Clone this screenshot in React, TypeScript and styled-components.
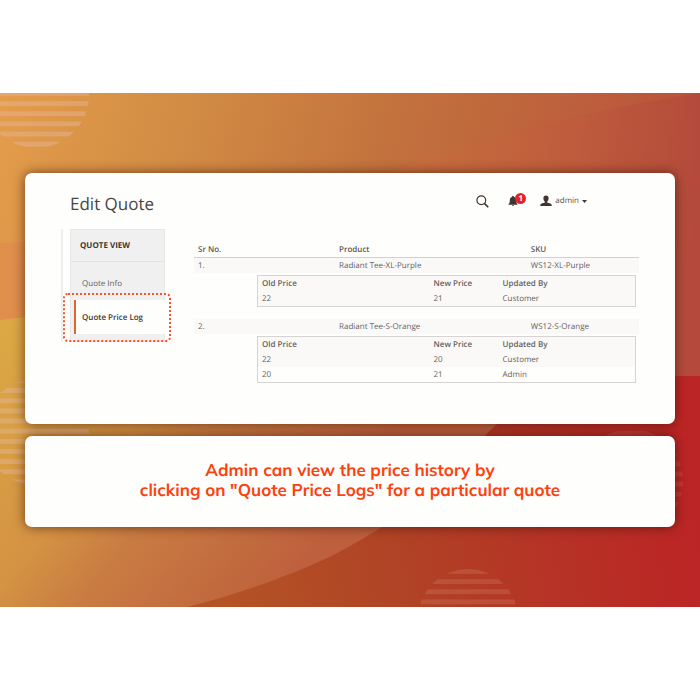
import React from "react";
import styled, { createGlobalStyle, css } from "styled-components";

const GlobalStyle = createGlobalStyle`
  *, *::before, *::after { box-sizing: border-box; }
  body {
    margin: 0;
    background: #ffffff;
    font-family: "Open Sans", "Noto Sans", sans-serif;
    text-rendering: geometricPrecision;
  }
`;

const Page = styled.div`
  min-height: 100vh;
  display: flex;
  flex-direction: column;
  justify-content: center;
`;

const Banner = styled.main`
  position: relative;
  isolation: isolate;
  display: flex;
  flex-direction: column;
  gap: 12px;
  padding: 80px 25px;
  overflow: hidden;
`;

const Backdrop = styled.svg`
  position: absolute;
  inset: 0;
  width: 100%;
  height: 100%;
  z-index: -1;
`;

const Card = styled.section`
  background: #fefefd;
  border-radius: 7px;
  box-shadow: 0 0 12px rgba(50, 15, 0, 0.65);
`;

const AdminCard = styled(Card)`
  padding: 17px 36px 41px 36px;
`;

const CaptionCard = styled(Card)`
  min-height: 91px;
  display: flex;
  align-items: center;
  justify-content: center;
  padding-bottom: 2px;
`;

const Caption = styled.p`
  margin: 0;
  color: #fb420f;
  font-family: "Mulish", "Muli", "Open Sans", sans-serif;
  font-size: 17px;
  font-weight: 700;
  line-height: 20px;
  text-align: center;
`;

const TopBar = styled.header`
  display: flex;
  align-items: center;
  justify-content: space-between;
  height: 28px;
  padding: 0 52px 0 9px;
`;

const Title = styled.h1`
  margin: 0;
  color: #4b4643;
  font-size: 17px;
  font-weight: 400;
  line-height: 28px;
`;

const Tools = styled.div`
  display: flex;
  align-items: center;
  height: 24px;
  margin-bottom: 6px;
`;

const ToolButton = styled.button<{ $gap?: number }>`
  position: relative;
  display: flex;
  align-items: center;
  gap: 3px;
  margin: 0 0 0 ${(p) => p.$gap ?? 0}px;
  padding: 0;
  border: 0;
  background: none;
  color: #5a504a;
  font: 400 8px/14px "Open Sans", sans-serif;
  text-rendering: inherit;
  cursor: pointer;
`;

const Badge = styled.span`
  position: absolute;
  top: -2px;
  left: 7px;
  width: 11px;
  height: 11px;
  border-radius: 50%;
  background: #e32428;
  color: #ffffff;
  font-size: 8px;
  font-weight: 700;
  line-height: 11px;
  text-align: center;
`;

const Content = styled.div`
  display: flex;
  align-items: flex-start;
  gap: 29px;
  margin-top: 11px;
`;

const SideArea = styled.div`
  flex: none;
  display: flex;
  gap: 7px;
`;

const Rail = styled.div`
  width: 2px;
  background: #eeeeee;
`;

const SideNav = styled.nav`
  width: 95px;
  height: 113px;
  border: 1px solid #e6e6e6;
  background: #f0f0f0;
`;

const SideHeading = styled.h2`
  margin: 0 0 4px;
  padding: 0 9px;
  border-bottom: 1px solid #e3e3e3;
  color: #41362f;
  font-size: 8px;
  font-weight: 700;
  line-height: 31px;
`;

const SideLink = styled.a<{ $active?: boolean }>`
  position: relative;
  display: flex;
  align-items: center;
  height: 34px;
  padding: 2px 0 0 11px;
  color: #666666;
  font-size: 8px;
  line-height: 12px;
  text-decoration: none;
  ${(p) =>
    p.$active &&
    css`
      margin: 0 -1px 0 3px;
      padding-left: 6px;
      border-left: 2px solid #e2662b;
      background: #fefefd;
      color: #41362f;
      font-weight: 600;
    `}
`;

const Highlight = styled.svg`
  position: absolute;
  top: -7px;
  left: -13px;
  width: 108px;
  height: 49px;
  pointer-events: none;
`;

const LogTable = styled.table`
  width: 100%;
  margin-top: 10px;
  border-collapse: separate;
  border-spacing: 0;
  table-layout: fixed;
  color: #5f5f5f;
  font-size: 8px;
  line-height: 15px;
`;

const TableArea = styled.div`
  flex: 1;
  min-width: 0;
`;

const Head = styled.th<{ $width?: string }>`
  width: ${(p) => p.$width ?? "auto"};
  height: 19px;
  padding: 2px 4px 0;
  border-bottom: 1px solid #d6d0cd;
  color: #5d5753;
  font-weight: 600;
  text-align: left;
`;

const Cell = styled.td`
  height: 15px;
  padding: 0 4px;
  background: #fbf9f7;
`;

const DetailCell = styled.td<{ $last?: boolean }>`
  padding: 2px 3px ${(p) => (p.$last ? 0 : 12)}px 63px;
`;

const PriceTable = styled.table`
  width: 100%;
  border: 1px solid #d6d3d2;
  border-collapse: separate;
  border-spacing: 0;
  table-layout: fixed;
`;

const PriceHead = styled.th<{ $width?: string }>`
  width: ${(p) => p.$width ?? "auto"};
  height: 15px;
  padding: 0 4px;
  background: #fbf9f7;
  font-weight: 600;
  text-align: left;
`;

const PriceCell = styled.td<{ $plain?: boolean }>`
  height: 15px;
  padding: 0 4px;
  background: ${(p) => (p.$plain ? "#fefefd" : "#fbf9f7")};
`;

type Change = { from: number; to: number; by: string };
type Product = { no: number; name: string; sku: string; changes: Change[] };

const products: Product[] = [
  {
    no: 1,
    name: "Radiant Tee-XL-Purple",
    sku: "WS12-XL-Purple",
    changes: [{ from: 22, to: 21, by: "Customer" }],
  },
  {
    no: 2,
    name: "Radiant Tee-S-Orange",
    sku: "WS12-S-Orange",
    changes: [
      { from: 22, to: 20, by: "Customer" },
      { from: 20, to: 21, by: "Admin" },
    ],
  },
];

const StripedDisc = ({ id, cx, cy, r, top, count, opacity }: {
  id: string; cx: number; cy: number; r: number; top: number; count: number; opacity: number;
}) => (
  <g fill="#e6b8a0" opacity={opacity}>
    <clipPath id={id}>
      <circle cx={cx} cy={cy} r={r} />
    </clipPath>
    <g clipPath={`url(#${id})`}>
      {Array.from({ length: count }, (_, i) => (
        <rect key={i} x={cx - 60} y={top + i * 10.15} width="120" height="4.8" />
      ))}
    </g>
  </g>
);

const Scenery = () => (
  <Backdrop viewBox="0 0 700 514" preserveAspectRatio="none" aria-hidden="true">
    <defs>
      <linearGradient id="sky" gradientUnits="userSpaceOnUse" x1="0" y1="20" x2="680" y2="210">
        <stop offset="0" stopColor="#e39c4b" />
        <stop offset="0.25" stopColor="#d28c44" />
        <stop offset="0.55" stopColor="#c2713d" />
        <stop offset="0.85" stopColor="#bc5a3c" />
        <stop offset="1" stopColor="#b74f3b" />
      </linearGradient>
      <linearGradient id="glow" gradientUnits="userSpaceOnUse" x1="0" y1="200" x2="700" y2="200">
        <stop offset="0" stopColor="#e18c4d" />
        <stop offset="0.55" stopColor="#cb703e" />
        <stop offset="0.8" stopColor="#bf5d3d" />
        <stop offset="0.97" stopColor="#b54b3b" />
        <stop offset="1" stopColor="#b3463b" />
      </linearGradient>
      <linearGradient id="sand" gradientUnits="userSpaceOnUse" x1="0" y1="240" x2="300" y2="480">
        <stop offset="0" stopColor="#dba845" />
        <stop offset="0.42" stopColor="#d49243" />
        <stop offset="0.6" stopColor="#c97c42" />
        <stop offset="1" stopColor="#be5f3d" />
      </linearGradient>
      <linearGradient id="ember" gradientUnits="userSpaceOnUse" x1="220" y1="480" x2="690" y2="400">
        <stop offset="0" stopColor="#b45325" />
        <stop offset="0.35" stopColor="#b04425" />
        <stop offset="0.7" stopColor="#b63226" />
        <stop offset="1" stopColor="#bc2525" />
      </linearGradient>
    </defs>
    <rect width="700" height="514" fill="url(#sky)" />
    <path d="M0 150 C150 145 300 105 375 85 C450 58 530 32 640 10 L700 0 V300 H0 Z" fill="url(#glow)" opacity="0.7" />
    <path d="M0 227 C80 216 180 225 350 270 L560 330 L400 514 H0 Z" fill="url(#sand)" />
    <path d="M187 514 C250 498 314 474 350 453 C400 426 440 391 484 344 C525 298 590 283 700 283 V514 Z" fill="url(#ember)" />
    <StripedDisc id="disc-a" cx={36} cy={2} r={53} top={-2} count={6} opacity={0.42} />
    <StripedDisc id="disc-b" cx={36} cy={339} r={53} top={285} count={11} opacity={0.42} />
    <StripedDisc id="disc-c" cx={468} cy={526} r={50} top={476} count={4} opacity={0.17} />
    <StripedDisc id="disc-d" cx={631} cy={388} r={52} top={338} count={10} opacity={0.12} />
  </Backdrop>
);

const SearchIcon = () => (
  <svg width="13" height="13" viewBox="0 0 13 13" fill="none" stroke="#41362f" strokeLinecap="round">
    <circle cx="5.3" cy="5.3" r="4.4" strokeWidth="1.2" />
    <path d="M8.6 8.6 L11.8 11.8" strokeWidth="1.6" />
  </svg>
);

const BellIcon = () => (
  <svg width="10" height="12" viewBox="0 0 10 12" fill="#41362f">
    <path d="M5 1 C5.7 1 6 1.4 6 2 C7.6 2.5 8.2 3.8 8.2 5.4 C8.2 7.3 8.6 8 9.5 9.2 V9.8 H.5 V9.2 C1.4 8 1.8 7.3 1.8 5.4 C1.8 3.8 2.4 2.5 4 2 C4 1.4 4.3 1 5 1 Z M3.8 10.3 H6.2 C6.1 11.3 3.9 11.3 3.8 10.3 Z" />
  </svg>
);

const UserIcon = () => (
  <svg width="12" height="12" viewBox="0 0 12 12" fill="#41362f">
    <path d="M6 .5 C7.8 .5 8.7 1.7 8.6 3.4 C8.5 4.9 7.9 5.9 7.2 6.5 V7.5 C8.4 8.2 11.7 8.2 11.7 10.2 V11 H.3 V10.2 C.3 8.2 3.6 8.2 4.8 7.5 V6.5 C4.1 5.9 3.5 4.9 3.4 3.4 C3.3 1.7 4.2 .5 6 .5 Z" />
  </svg>
);

const CaretIcon = () => (
  <svg width="5" height="3" viewBox="0 0 5 3" fill="#41362f">
    <path d="M0 0 H5 L2.5 3 Z" />
  </svg>
);

const PriceLog = ({ changes }: { changes: Change[] }) => (
  <PriceTable>
    <thead>
      <tr>
        <PriceHead $width="45.5%">Old Price</PriceHead>
        <PriceHead $width="18.3%">New Price</PriceHead>
        <PriceHead>Updated By</PriceHead>
      </tr>
    </thead>
    <tbody>
      {changes.map((c, i) => (
        <tr key={i}>
          <PriceCell $plain={i % 2 === 1}>{c.from}</PriceCell>
          <PriceCell $plain={i % 2 === 1}>{c.to}</PriceCell>
          <PriceCell $plain={i % 2 === 1}>{c.by}</PriceCell>
        </tr>
      ))}
    </tbody>
  </PriceTable>
);

export default function App() {
  return (
    <Page>
      <GlobalStyle />
      <Banner>
        <Scenery />
        <AdminCard>
          <TopBar>
            <Title>Edit Quote</Title>
            <Tools>
              <ToolButton aria-label="Search">
                <SearchIcon />
              </ToolButton>
              <ToolButton $gap={19} aria-label="Notifications">
                <BellIcon />
                <Badge>1</Badge>
              </ToolButton>
              <ToolButton $gap={22}>
                <UserIcon />
                <span>admin</span>
                <CaretIcon />
              </ToolButton>
            </Tools>
          </TopBar>
          <Content>
            <SideArea>
              <Rail />
              <SideNav aria-label="Quote view">
                <SideHeading>QUOTE VIEW</SideHeading>
                <SideLink href="#info">Quote Info</SideLink>
                <SideLink href="#price-log" $active aria-current="page">
                  Quote Price Log
                  <Highlight viewBox="0 0 108 49" aria-hidden="true">
                    <rect x="1" y="1" width="106" height="47" rx="4" fill="none" stroke="#f4572f" strokeWidth="2" strokeDasharray="2 2" />
                  </Highlight>
                </SideLink>
              </SideNav>
            </SideArea>
            <TableArea>
              <LogTable>
                <thead>
                  <tr>
                    <Head $width="31.7%">Sr No.</Head>
                    <Head $width="43.1%">Product</Head>
                    <Head>SKU</Head>
                  </tr>
                </thead>
                <tbody>
                  {products.map((p, i) => (
                    <React.Fragment key={p.no}>
                      <tr>
                        <Cell>{p.no}.</Cell>
                        <Cell>{p.name}</Cell>
                        <Cell>{p.sku}</Cell>
                      </tr>
                      <tr>
                        <DetailCell colSpan={3} $last={i === products.length - 1}>
                          <PriceLog changes={p.changes} />
                        </DetailCell>
                      </tr>
                    </React.Fragment>
                  ))}
                </tbody>
              </LogTable>
            </TableArea>
          </Content>
        </AdminCard>
        <CaptionCard>
          <Caption>
            Admin can view the price history by
            <br />
            clicking on "Quote Price Logs" for a particular quote
          </Caption>
        </CaptionCard>
      </Banner>
    </Page>
  );
}
